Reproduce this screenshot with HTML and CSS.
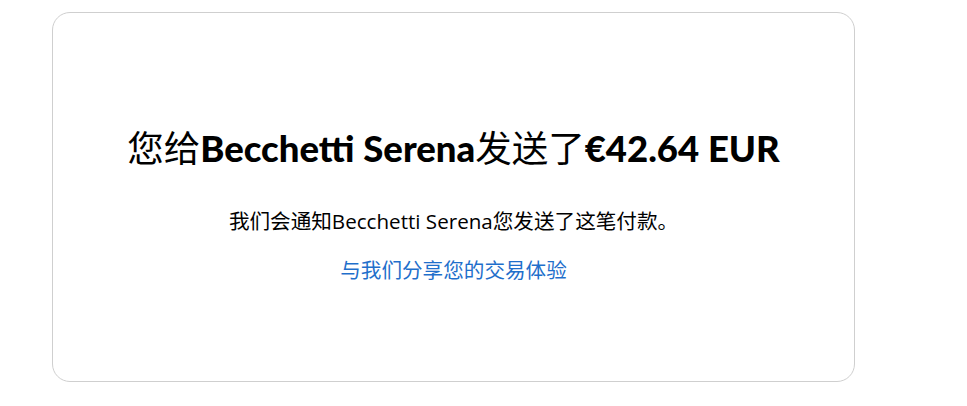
FILE: index.html
```html
<!DOCTYPE html>
<html lang="zh-CN">
<head>
  <meta charset="UTF-8" />
  <meta name="viewport" content="width=device-width, initial-scale=1.0" />
  <title>付款已发送</title>
  <link rel="stylesheet" href="styles.css">
</head>
<body>
  <div class="page">
    <div class="card">
      <h1 class="title">您给<b>Becchetti Serena</b>发送了<b>€42.64 EUR</b></h1>
      <p class="note">我们会通知Becchetti Serena您发送了这笔付款。</p>
      <a class="feedback" href="#">与我们分享您的交易体验</a>
    </div>
  </div>
</body>
</html>
```

FILE: styles.css
```css
body {
  margin: 0;
  background-color: #fff;
  color: #000;
  font-family: "Lato", "Noto Sans CJK SC", sans-serif;
}
.page {
  padding: 12px 0 0 52px;
}
.card {
  width: 803px;
  height: 370px;
  box-sizing: border-box;
  border: 1px solid #cfcfcf;
  border-radius: 18px;
  display: flex;
  flex-direction: column;
  align-items: center;
  padding-top: 111px;
}
.title {
  margin: 0;
  font-size: 36.5px;
  font-weight: 400;
  line-height: 48px;
}
.title b {
  font-weight: 900;
}
.note {
  margin: 35px 0 0;
  font-family: "Open Sans", "Noto Sans CJK SC", sans-serif;
  font-size: 20.6px;
  line-height: 28px;
}
.feedback {
  margin-top: 22px;
  font-family: "Open Sans", "Noto Sans CJK SC", sans-serif;
  font-size: 20.6px;
  line-height: 26px;
  color: #1f6fcb;
  text-decoration: none;
}
```
